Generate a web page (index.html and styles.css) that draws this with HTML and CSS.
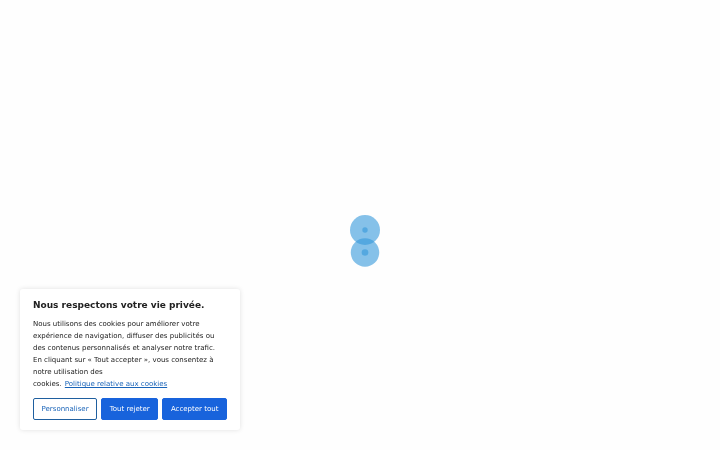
FILE: index.html
```html
<!DOCTYPE html>
<html lang="fr">
<head>
  <meta charset="UTF-8" />
  <meta name="viewport" content="width=device-width, initial-scale=1" />
  <title>Chargement</title>
  <link rel="stylesheet" href="styles.css">
</head>
<body>
  <main class="loader">
    <svg class="loader-dots" width="32" height="56" viewBox="0 0 32 56" fill="#3498db" aria-hidden="true">
      <circle cx="16" cy="18" r="15" fill-opacity="0.6" />
      <circle cx="16" cy="40.5" r="14.2" fill-opacity="0.6" />
      <circle cx="16" cy="18" r="2.7" fill-opacity="0.6" />
      <circle cx="16" cy="40.5" r="3.3" fill-opacity="0.6" />
    </svg>
  </main>

  <section class="consent" aria-labelledby="consent-title">
    <h2 class="consent-title" id="consent-title">Nous respectons votre vie privée.</h2>
    <p class="consent-text">Nous utilisons des cookies pour améliorer votre expérience de navigation, diffuser des publicités ou des contenus personnalisés et analyser notre trafic. En cliquant sur « Tout accepter », vous consentez à notre utilisation des cookies.&nbsp;<a href="#cookies">Politique&nbsp;relative&nbsp;aux&nbsp;cookies</a></p>
    <div class="consent-buttons">
      <button type="button" class="btn btn-outline">Personnaliser</button>
      <button type="button" class="btn">Tout rejeter</button>
      <button type="button" class="btn">Accepter tout</button>
    </div>
  </section>
</body>
</html>
```

FILE: styles.css
```css
* {
  box-sizing: border-box;
}
body {
  margin: 0;
  background-color: #fefefe;
  color: #212121;
  font-family: "DejaVu Sans", sans-serif;
}
.loader {
  display: flex;
  align-items: center;
  justify-content: center;
  min-height: 100vh;
  padding: 30px 0 0 10px;
}
.loader-dots {
  display: block;
}

/* cookie banner floats over the page */
.consent {
  position: fixed;
  left: 20px;
  bottom: 20px;
  width: 220px;
  padding: 10px 13px;
  background: #fff;
  border-radius: 3px;
  box-shadow: 0 0 5px rgba(0, 0, 0, 0.12);
}
.consent-title {
  margin: 0 0 6px;
  font-size: 9px;
  line-height: 13px;
}
.consent-text {
  margin: 0 0 8px;
  padding-right: 11px;
  font-size: 7px;
  line-height: 12px;
}
.consent-text a {
  margin-left: 1px;
  color: #1863b8;
}
.consent-buttons {
  display: flex;
  gap: 4px;
}
.btn {
  flex: 1 1 auto;
  padding: 0 6px;
  border: 1px solid #1863dc;
  border-radius: 2px;
  background: #1863dc;
  color: #fff;
  font-family: inherit;
  font-size: 7px;
  line-height: 20px;
  white-space: nowrap;
  cursor: pointer;
}
.btn-outline {
  background: #fff;
  border-color: #1f5f9f;
  color: #1863b8;
}
```
